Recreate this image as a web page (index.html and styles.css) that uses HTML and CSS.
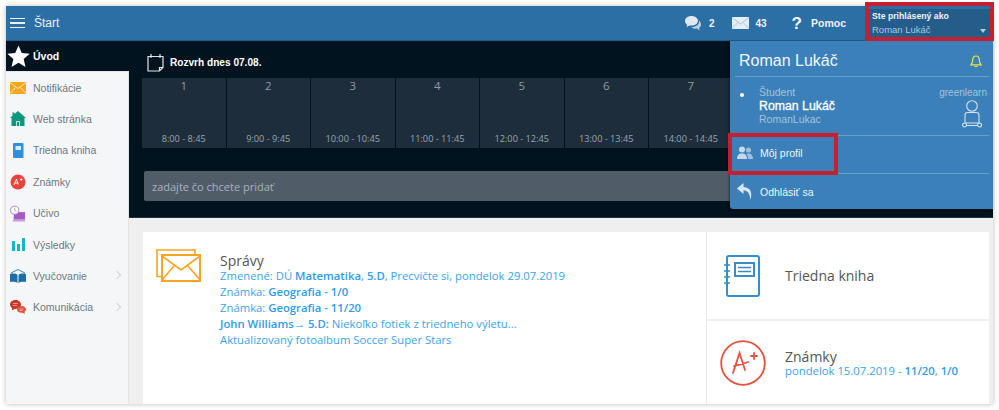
FILE: index.html
```html
<!DOCTYPE html>
<html lang="sk">
<head>
<meta charset="utf-8">
<title>Štart</title>
<link rel="stylesheet" href="styles.css">
</head>
<body>
<div class="app">
  <header class="topbar">
    <div class="burger"><i></i><i></i><i></i></div>
    <span class="start">Štart</span>
    <div class="top-right">
      <div class="top-item chat">
        <svg width="17" height="15" viewBox="0 0 17 15"><path fill="#dfe9f2" d="M6.500 0C2.900 0 0 2.200 0 5c0 1.500.8 2.800 2.200 3.700L1.500 11l3-1.600c.6.100 1.300.2 2 .2 3.600 0 6.500-2.200 6.500-4.800S10.100 0 6.500 0z"/><path fill="#b9cfe2" d="M14 4.500c.1.300.1.600.1.900 0 3.100-3.200 5.500-7.300 5.500h-.6c1 1.100 2.600 1.800 4.400 1.800.5 0 .9 0 1.400-.1l2.700 1.900-.6-2.500c1.200-.8 1.900-2 1.900-3.200 0-1.700-.7-3.200-1.900-4.300z"/></svg>
        <b>2</b>
      </div>
      <div class="top-item mail">
        <svg width="17" height="12" viewBox="0 0 17 12"><rect width="17" height="12" fill="#e6eef5"/><path d="M0 .5l8.500 6.500L17 .5M0 11.500l6-6M17 11.500l-6-6" fill="none" stroke="#a9c5dc" stroke-width="1"/></svg>
        <b>43</b>
      </div>
      <div class="top-item help"><span class="qm">?</span><b>Pomoc</b></div>
      <div class="user-box">
        <b>Ste prihlásený ako</b>
        <span>Roman Lukáč</span>
        <i class="caret"></i>
      </div>
    </div>
  </header>
  <div class="body">
    <aside class="side">
      <div class="home">
        <svg width="23" height="23" viewBox="0 0 24 24"><path fill="#fff" d="M12 .5l3.400 7.800 8.300.8-6.300 5.600 1.900 8.300L12 18.600 4.700 23l1.900-8.300L.3 9.100l8.300-.8z"/></svg>
        <b>Úvod</b>
      </div>
      <nav class="menu">
        <div class="mi"><svg width="16" height="12" viewBox="0 0 16 12"><rect width="16" height="12" fill="#f6a623"/><path d="M0 .5l8 6 8-6M0 11.500l5.500-6M16 11.500l-5.500-6" fill="none" stroke="#fde6bd" stroke-width="1"/></svg><span>Notifikácie</span></div>
        <div class="mi"><svg width="16" height="16" viewBox="0 0 16 16"><path fill="#11957c" d="M8 0l8 7h-1.500v8h-13V7H0l2.500-2.200V1.500h2v1.600z"/><rect x="6" y="10" width="4" height="5" fill="#bfe3db"/><rect x="7" y="11" width="2" height="4" fill="#11957c"/></svg><span>Web stránka</span></div>
        <div class="mi"><svg width="16" height="15" viewBox="0 0 16 15"><rect x="3" y="0" width="10.500" height="15" rx="1" fill="#2e8fde"/><rect x="5.500" y="3" width="5.500" height="4" fill="#d8ebfa"/></svg><span>Triedna kniha</span></div>
        <div class="mi"><svg width="16" height="16" viewBox="0 0 16 16"><circle cx="8" cy="8" r="7.500" fill="#e8443a"/><path d="M4 11l2.500-6 1.500 5.500M5 9h3.500M10 5.500h2.500M11.200 4.300v2.500" fill="none" stroke="#fff" stroke-width=".9"/></svg><span>Známky</span></div>
        <div class="mi"><svg width="17" height="17" viewBox="0 0 17 17"><path fill="#a45cc4" d="M4 7h12v8H4z"/><rect x="3" y="15" width="13" height="2" fill="#c99ade"/><circle cx="5" cy="5" r="4.300" fill="#fff" stroke="#b478cf"/><path d="M5 2.500V5l2 1" fill="none" stroke="#b478cf" stroke-width=".8"/></svg><span>Učivo</span></div>
        <div class="mi"><svg width="16" height="13" viewBox="0 0 16 13"><rect x="2" y="3" width="3" height="10" fill="#17b4c9"/><rect x="7" y="6" width="3" height="7" fill="#17b4c9"/><rect x="12" y="0" width="3" height="13" fill="#17b4c9"/></svg><span>Výsledky</span></div>
        <div class="mi"><svg width="16" height="14" viewBox="0 0 16 14"><path d="M1 4l7-3.500L15 4" fill="none" stroke="#3a86b8"/><path fill="#1e6ea6" d="M0 5c3-.8 6-.5 7.500 1v8C6 12.800 3 12.500 0 13zM16 5c-3-.8-6-.5-7.500 1v8c1.500-1.200 4.500-1.500 7.500-1z"/></svg><span>Vyučovanie</span><em class="chev"></em></div>
        <div class="mi"><svg width="16" height="15" viewBox="0 0 16 15"><path fill="#c8392c" d="M5.500 0C2.500 0 0 2 0 4.500c0 1.500.9 2.800 2.200 3.600L1.800 10.500l2.900-1.600h.8c3 0 5.500-2 5.500-4.400S8.500 0 5.500 0z"/><path fill="#e0553f" d="M11.500 6c2.500 0 4.500 1.500 4.500 3.300 0 1-.6 1.900-1.500 2.500l.4 2.200-2.500-1.300c-2.700.3-5.400-1-5.400-3 0-2 2-3.700 4.500-3.700z"/><path d="M3 3.500h5M3 5.500h4M9.500 9h4M9.500 10.500h3" stroke="#f5c3bb" stroke-width=".7"/></svg><span>Komunikácia</span><em class="chev"></em></div>
      </nav>
    </aside>
    <main class="main">
      <section class="band">
        <div class="sched-head">
          <svg width="17" height="19" viewBox="0 0 17 19"><path d="M1 3.500h15v11l-3.500 3.500H1zM4 1v4M13 1v4M12.500 18v-3.500H16" fill="none" stroke="#e3e6e8" stroke-width="1.200"/></svg>
          <b>Rozvrh dnes 07.08.</b>
        </div>
        <div class="cells">
          <div class="cell"><span>1</span><small>8:00 - 8:45</small></div>
          <div class="cell"><span>2</span><small>9:00 - 9:45</small></div>
          <div class="cell"><span>3</span><small>10:00 - 10:45</small></div>
          <div class="cell"><span>4</span><small>11:00 - 11:45</small></div>
          <div class="cell"><span>5</span><small>12:00 - 12:45</small></div>
          <div class="cell"><span>6</span><small>13:00 - 13:45</small></div>
          <div class="cell"><span>7</span><small>14:00 - 14:45</small></div>
        </div>
        <div class="add">zadajte čo chcete pridať</div>
      </section>
      <section class="content">
        <div class="card">
          <div class="news">
            <svg class="news-ico" width="45" height="33" viewBox="0 0 45 33"><path d="M6 27.500H1V1h38v4" fill="none" stroke="#f6a623" stroke-width="1.600"/><rect x="6" y="6" width="38" height="26" fill="#fff" stroke="#f6a623" stroke-width="2"/><path d="M6 7l19 14L44 7M6 31l12-14M44 31L32 17" fill="none" stroke="#f6a623" stroke-width="1.600"/></svg>
            <div class="news-text">
              <h3>Správy</h3>
              <p>Zmenené: DÚ <b>Matematika</b>, <b>5.D</b>, Precvičte si, pondelok 29.07.2019</p>
              <p>Známka: <b>Geografia - 1/0</b></p>
              <p>Známka: <b>Geografia - 11/20</b></p>
              <p><b>John Williams→ 5.D:</b> Niekoľko fotiek z triedneho výletu...</p>
              <p>Aktualizovaný fotoalbum Soccer Super Stars</p>
            </div>
          </div>
          <div class="tiles">
            <div class="tile tile-a">
              <svg width="36" height="42" viewBox="0 0 36 42"><rect x="3" y="1" width="32" height="40" rx="2" fill="none" stroke="#3a8cc6" stroke-width="2"/><rect x="11" y="8" width="19" height="13" fill="none" stroke="#3a8cc6" stroke-width="2"/><path d="M14 12.500h13M14 16.500h13M0 10h6M0 16h6M0 22h6M0 28h6M3 8v22" stroke="#3a8cc6" stroke-width="1.500" fill="none"/></svg>
              <h3>Triedna kniha</h3>
            </div>
            <div class="tile tile-b">
              <svg width="46" height="46" viewBox="0 0 46 46"><circle cx="23" cy="23" r="21.800" fill="none" stroke="#e8503f" stroke-width="1.800"/><path d="M13 33L19.500 13 25 30M14 26c4-1 9-2 14-4M31 16h6M34 13v6" fill="none" stroke="#e8503f" stroke-width="1.800" stroke-linecap="round"/></svg>
              <div class="tile-text">
                <h3>Známky</h3>
                <p>pondelok 15.07.2019 - <b>11/20</b>, <b>1/0</b></p>
              </div>
            </div>
          </div>
        </div>
      </section>
    </main>
  </div>
  <div class="panel">
    <div class="p-head"><span>Roman Lukáč</span>
      <svg width="12" height="13" viewBox="0 0 12 13"><path d="M6 1c-2.200 0-3.300 1.800-3.300 4 0 2.500-.9 3.800-1.700 4.800h10c-.8-1-1.700-2.300-1.700-4.800C9.300 2.800 8.200 1 6 1zM4.500 11.500h3" fill="none" stroke="#e9e74a" stroke-width="1.200"/></svg>
    </div>
    <div class="p-user">
      <i class="dot"></i>
      <div class="p-who">
        <small>Študent</small>
        <b>Roman Lukáč</b>
        <small>RomanLukac</small>
      </div>
      <div class="p-org">
        <small>greenlearn</small>
        <svg width="20" height="28" viewBox="0 0 20 28"><circle cx="10" cy="6" r="5.300" fill="none" stroke="#d3e3f0" stroke-width="1.100"/><path d="M3 15c0-1.500 1-2.500 2.500-2.500h9C16 12.500 17 13.500 17 15v8H3zM2.500 23a2 2 0 1 0 .1 4 2 2 0 0 0-.1-4zM17.500 23a2 2 0 1 0 .1 4 2 2 0 0 0-.1-4zM4.500 25.500h11" fill="none" stroke="#d3e3f0" stroke-width="1.100"/></svg>
      </div>
    </div>
    <div class="p-link p-profile">
      <svg width="16" height="13" viewBox="0 0 16 13"><circle cx="5" cy="3.500" r="3" fill="#c5d9ea"/><path fill="#c5d9ea" d="M0 13c0-3.500 1.500-5.500 5-5.500s5 2 5 5.500z"/><circle cx="11.500" cy="4" r="2.600" fill="#9fc0db"/><path fill="#9fc0db" d="M11 13c0-2.500-.5-4-1.700-5 .6-.4 1.300-.6 2.200-.6 3 0 4.500 2 4.500 5.600z"/></svg>
      <span>Môj profil</span>
    </div>
    <div class="p-link p-logout">
      <svg width="15" height="17" viewBox="0 0 15 17"><path fill="#d9e6f1" d="M6.500 0L0 5.500 6.500 11V7.500c3.500 0 6 1.500 7 9.500 1.500-6 1.500-12.500-7-13z"/></svg>
      <span>Odhlásiť sa</span>
    </div>
  </div>
  <div class="mark mark-user"></div>
  <div class="mark mark-profile"></div>
</div>
</body>
</html>
```
FILE: styles.css
```css
* { box-sizing: border-box; }
html, body { margin: 0; height: 100%; background: #fff; overflow: hidden; }
body { padding: 6px 6px 6px 6px; font-family: "Liberation Sans", Arial, sans-serif; }
h3, p { margin: 0; font-weight: 400; }

.app { width: 987px; height: 398px; display: flex; flex-direction: column; background: #efefef; box-shadow: 0 0 5px rgba(0,0,0,.28); overflow: hidden; }

.topbar { height: 35px; flex: none; display: flex; align-items: center; background: #2c6fa5; border-bottom: 1px solid #1f5a8c; padding-left: 4px; color: #fff; }
.burger { width: 15px; display: flex; flex-direction: column; gap: 3px; margin-right: 9px; }
.burger i { display: block; height: 1.500px; background: #e9f0f6; }
.start { font-size: 12px; color: #e8eff5; }
.top-right { margin-left: auto; display: flex; align-items: center; height: 100%; }
.top-item { display: flex; align-items: center; font-size: 10px; color: #eef3f8; }
.top-item b { font-weight: 700; }
.chat { gap: 7px; }
.mail { gap: 6px; margin-left: 18px; }
.help { margin-left: 25px; gap: 9px; }
.help b { font-size: 10.500px; }
.qm { font-size: 17px; font-weight: 700; color: #f3f6f9; line-height: 1; }
.user-box { position: relative; width: 123px; height: 31px; margin: 2px 3px 0 21px; padding: 2px 0 0 5px; background: #245d8a; display: flex; flex-direction: column; gap: 2px; }
.user-box b { font-size: 8.700px; color: #f0f4f8; line-height: 11px; }
.user-box span { font-size: 9.500px; color: #a9c8e0; line-height: 12px; }
.caret { position: absolute; right: 4px; bottom: 7px; border: 3.500px solid transparent; border-top: 4px solid #b5cde0; border-bottom: 0; }

.body { flex: 1; display: flex; min-height: 0; }
.side { width: 123px; flex: none; display: flex; flex-direction: column; background: #f5f6f8; border-right: 1px solid #e2e4e7; }
.home { height: 31px; flex: none; display: flex; align-items: center; gap: 3px; padding-left: 1px; background: #00131f; border-bottom: 1px solid #e6e8ea; color: #fff; margin-right: -1px; }
.home b { font-size: 10.500px; }
.menu { display: flex; flex-direction: column; }
.mi { position: relative; height: 31.400px; display: flex; align-items: center; padding-left: 4px; color: #6d7884; font-size: 10.500px; }
.mi svg { flex: none; width: 16px; margin-right: 7px; }
.chev { position: absolute; right: 8px; top: 12px; width: 6px; height: 6px; border-top: 1px solid #cfd3d7; border-right: 1px solid #cfd3d7; transform: rotate(45deg); }

.main { flex: 1; min-width: 0; display: flex; flex-direction: column; }
.band { height: 177px; flex: none; background: #00131f; padding: 9px 0 0 13px; border-bottom: 1px solid #24323f; overflow: hidden; }
.sched-head { height: 28px; display: flex; align-items: center; gap: 6px; padding: 0 0 4px 5px; color: #fff; }
.sched-head b { font-size: 10.100px; }
.cells { display: flex; gap: 1px; }
.cell { width: 83.500px; height: 70px; flex: none; display: flex; flex-direction: column; align-items: center; justify-content: space-between; padding: 0 0 3px; background: #1e2d3b; font-family: "Open Sans", sans-serif; color: #8f9ba6; }
.cell span { font-size: 11.500px; line-height: 16px; }
.cell small { font-size: 9.200px; line-height: 12px; color: #9aa5ae; }
.add { width: 700px; height: 30px; margin: 23px 0 0 2px; padding-left: 8px; display: flex; align-items: center; background: #505d69; border-radius: 2px; font-family: "Open Sans", sans-serif; font-size: 11px; color: #aab2ba; }

.content { flex: 1; min-height: 0; padding: 14px 4px 0 14px; }
.card { height: 100%; display: flex; background: #fff; font-family: "Open Sans", sans-serif; }
.news { width: 564px; flex: none; display: flex; padding: 17px 0 0 13px; border-right: 1px solid #eaeaea; }
.news-ico { flex: none; margin-right: 19px; }
.news-text { color: #3ba3ec; font-size: 11.300px; line-height: 16px; padding-top: 4px; }
.news-text h3 { font-size: 14px; line-height: 15px; color: #555; }
.news-text b, .tile-text b { font-weight: 600; color: #2f9ceb; }
.tiles { flex: 1; display: flex; flex-direction: column; }
.tile { display: flex; align-items: center; }
.tile h3 { font-size: 14px; line-height: 16px; color: #555; }
.tile-a { height: 89px; flex: none; padding-left: 17px; gap: 25px; border-bottom: 2px solid #efefef; }
.tile-b { flex: 1; padding: 3px 0 3px 13px; gap: 19px; }
.tile-text p { font-size: 11.300px; line-height: 12px; color: #3ba3ec; }

.panel { position: absolute; left: 730px; top: 41px; width: 263px; height: 168px; background: #3b80b8; border-radius: 0 0 0 3px; box-shadow: -1px 1px 3px rgba(0,0,0,.4); color: #fff; padding: 0 4px 0 5px; display: flex; flex-direction: column; }
.p-head { height: 36px; flex: none; display: flex; align-items: center; justify-content: space-between; padding: 5px 7px 0 4px; border-bottom: 1px solid #6a9ecb; font-size: 16px; color: #f2f6fa; }
.p-user { height: 59px; flex: none; display: flex; padding: 9px 2px 0 5px; border-bottom: 1px solid #6a9ecb; }
.dot { width: 4px; height: 4px; margin-top: 7px; border-radius: 50%; background: #fff; flex: none; margin-right: 15px; }
.p-who { display: flex; flex-direction: column; font-size: 11px; line-height: 13px; }
.p-who small { font-size: 10.500px; color: #a3c3de; }
.p-who b { font-size: 12.300px; font-weight: 400; -webkit-text-stroke: .3px #fff; line-height: 14px; }
.p-org { margin-left: auto; display: flex; flex-direction: column; align-items: flex-end; }
.p-org small { font-size: 10px; line-height: 13px; color: #a3c3de; }
.p-org svg { margin-right: 5px; margin-top: 1px; }
.p-link { display: flex; align-items: center; gap: 7px; padding-left: 2px; font-size: 10.500px; color: #eef4f9; }
.p-profile { height: 38px; flex: none; padding-bottom: 4px; border-bottom: 1px solid #6a9ecb; }
.p-logout { flex: 1; gap: 8px; }

.mark { position: absolute; border: 4px solid #c4202f; }
.mark-user { left: 865px; top: 2px; width: 129px; height: 39px; }
.mark-profile { left: 728px; top: 133px; width: 110px; height: 42px; }
```
